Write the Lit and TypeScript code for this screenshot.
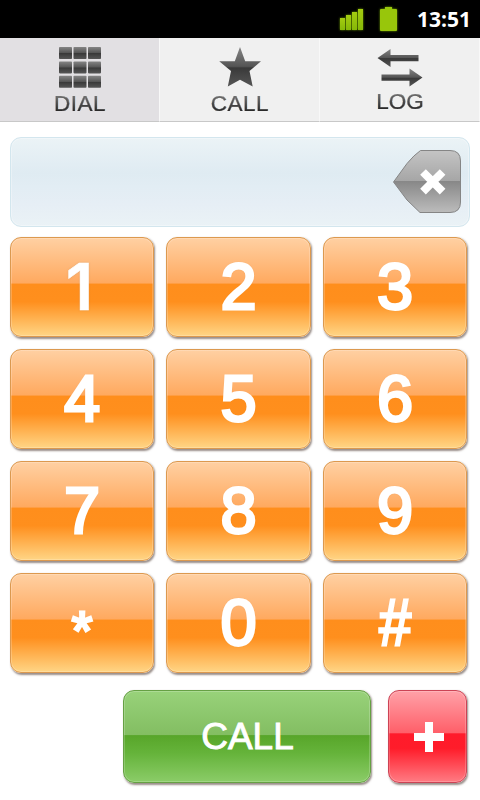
import { LitElement, html, css, svg } from "lit";
import { customElement, property, state } from "lit/decorators.js";
import { classMap } from "lit/directives/class-map.js";

const KEYS = ["1", "2", "3", "4", "5", "6", "7", "8", "9", "*", "0", "#"];

@customElement("status-bar")
export class StatusBar extends LitElement {
  @property({ type: String }) time = "";

  static styles = css`
    :host {
      display: flex;
      align-items: center;
      justify-content: flex-end;
      height: 38px;
      background: #000;
      color: #fff;
      font: bold 21px/38px "Open Sans", sans-serif;
    }

    .signal,
    .battery {
      display: block;
      filter: drop-shadow(0 0 1px #6c9a00);
    }

    .signal {
      margin-right: 15px;
    }

    .time {
      padding: 0 9px 0 19px;
    }
  `;

  render() {
    return html`
      <svg class="signal" width="26" height="26" viewBox="0 0 26 26">
        <defs>
          <linearGradient id="lime" x2="0" y2="1">
            <stop offset="0" stop-color="#a4cc10" />
            <stop offset="1" stop-color="#86b808" />
          </linearGradient>
        </defs>
        <g fill="url(#lime)">
          <rect x="2" y="12" width="5" height="12" />
          <rect x="8" y="9" width="5" height="15" />
          <rect x="14" y="6" width="5" height="18" />
          <rect x="20" y="3" width="5" height="21" />
        </g>
      </svg>
      <svg class="battery" width="19" height="26" viewBox="0 0 19 26">
        <path
          d="M2 3H6V1H13V3H17Q18 3 18 4V24Q18 25 17 25H2Q1 25 1 24V4Q1 3 2 3Z"
          fill="#98c60b"
        />
      </svg>
      <span class="time">${this.time}</span>
    `;
  }
}

@customElement("tab-item")
export class TabItem extends LitElement {
  @property({ type: String }) icon: "dial" | "star" | "log" = "dial";
  @property({ type: String }) label = "";
  @property({ type: Boolean }) active = false;

  static styles = css`
    :host {
      display: block;
    }

    .tab {
      box-sizing: border-box;
      display: flex;
      flex-direction: column;
      align-items: center;
      height: 84px;
      padding-top: 8px;
      border-bottom: 1px solid #c8c8c8;
      border-right: 1px solid #f8f8f8;
      background: #f0f0f0;
    }

    .tab.active {
      background: #e2e0e3;
    }

    .icon {
      display: block;
    }

    .label {
      margin-top: 1px;
      padding-left: 1px;
      font: 22.5px/28px "Liberation Sans", Arial, sans-serif;
      letter-spacing: 0.5px;
      color: transparent;
      background: linear-gradient(#777 5px, #222 22px);
      -webkit-background-clip: text;
      background-clip: text;
      -webkit-text-stroke: 0.2px #444;
    }

    .tab.log .label {
      margin-top: -1px;
      letter-spacing: 0;
    }
  `;

  private shape() {
    if (this.icon === "star") {
      return svg`<path fill="url(#tone)" d="M24 1L29.2 15.3H45L33.5 25L36.7 40.5L24 33.8L11.8 40.5L15 25L3.2 15.3H18.8Z" />`;
    }
    if (this.icon === "log") {
      return svg`
        <path fill="url(#tone)" d="M1.5 12L14.5 3V9H42.5V15.2H14.5V21Z" />
        <path fill="url(#tone)" d="M46.5 31.5L33.5 22.5V28.5H5.5V34.7H33.5V40.5Z" />
      `;
    }
    const cells = [0, 1, 2];
    return cells.map((row) =>
      cells.map(
        (col) =>
          svg`<rect x=${3 + col * 14.5} y=${1 + row * 14.4} width="13" height="12" rx="0.8" fill="url(#tone)" />`
      )
    );
  }

  render() {
    return html`
      <div class=${classMap({ tab: true, active: this.active, [this.icon]: true })}>
        <svg class="icon" width="48" height="43" viewBox="0 0 48 43">
          <defs>
            <linearGradient id="tone" x2="0" y2="1">
              <stop offset="0" stop-color="#858585" />
              <stop offset="0.49" stop-color="#555" />
              <stop offset="0.53" stop-color="#393939" />
              <stop offset="1" stop-color="#565656" />
            </linearGradient>
          </defs>
          ${this.shape()}
        </svg>
        <span class="label">${this.label}</span>
      </div>
    `;
  }
}

@customElement("number-field")
export class NumberField extends LitElement {
  @property({ type: String }) value = "";

  static styles = css`
    :host {
      box-sizing: border-box;
      display: flex;
      align-items: center;
      height: 90px;
      padding: 0 7px 0 14px;
      border: 1px solid #d3e6ee;
      border-radius: 11px;
      background: linear-gradient(
        #ebf3f6 0%,
        #dfebf2 40%,
        #e2edf4 55%,
        #e6eef5 75%,
        #eaf2f6 100%
      );
      box-shadow: inset 0 0 0 1px rgba(255, 255, 255, 0.3);
      font: 40px "Liberation Sans", Arial, sans-serif;
      color: #333;
    }

    .value {
      flex: 1;
    }

    .erase {
      padding: 0;
      border: 0;
      background: none;
    }

    .erase svg {
      display: block;
    }
  `;

  render() {
    return html`
      <span class="value">${this.value}</span>
      <button
        class="erase"
        @click=${() => this.dispatchEvent(new CustomEvent("erase"))}
      >
        <svg width="70" height="66" viewBox="0 0 70 66">
          <defs>
            <linearGradient id="steel" x2="0" y2="1">
              <stop offset="0" stop-color="#c4c4c4" />
              <stop offset="0.49" stop-color="#a6a6a6" />
              <stop offset="0.5" stop-color="#888" />
              <stop offset="1" stop-color="#bcbcbc" />
            </linearGradient>
          </defs>
          <path
            d="M1.5 33L15 14.5Q22 6 28.5 1.5H58Q68.5 1.5 68.5 12V53Q68.5 63.5 58 63.5H28L15 51Z"
            fill="url(#steel)"
            stroke="#858585"
          />
          <path
            d="M31 23L50.6 42.6M50.6 23L31 42.6"
            stroke="#fff"
            stroke-width="8"
          />
        </svg>
      </button>
    `;
  }
}

@customElement("gloss-button")
export class GlossButton extends LitElement {
  @property({ type: String }) tone: "orange" | "green" | "red" = "orange";

  static styles = css`
    :host {
      display: block;
    }

    .button {
      box-sizing: border-box;
      display: flex;
      align-items: center;
      justify-content: center;
      width: 100%;
      height: 100%;
      padding: 0;
      border: 1px solid;
      border-radius: 11px;
      color: #fff;
      box-shadow:
        inset 0 0 0 1px rgba(255, 255, 255, 0.2),
        1px 1.5px 2px rgba(70, 50, 40, 0.55);
    }

    .orange {
      border-color: #dc994f;
      background: linear-gradient(
        #ffd0a2 0%,
        #ffa95f 46%,
        #ff8e1c 47%,
        #ff8f1d 65%,
        #ffd585 100%
      );
    }

    .green {
      border-color: #66a044;
      background: linear-gradient(
        #98d27a 0%,
        #83be62 48%,
        #58a62a 49%,
        #65b33a 68%,
        #8bcc68 100%
      );
    }

    .red {
      border-color: #cc4355;
      background: linear-gradient(
        #ffa1a8 0%,
        #ff5f69 46%,
        #ff1b2b 47%,
        #ff1c2a 63%,
        #ff7b83 100%
      );
    }
  `;

  render() {
    return html`
      <button class="button ${this.tone}"><slot></slot></button>
    `;
  }
}

@customElement("app-root")
export class AppRoot extends LitElement {
  @state() private number = "";

  static styles = css`
    :host {
      display: block;
      height: 800px;
      overflow: hidden;
      background: #fff;
    }

    .tabs {
      display: grid;
      grid-template-columns: repeat(3, 1fr);
    }

    .field {
      margin: 15px 10px 10px;
    }

    .keys {
      display: grid;
      grid-template-columns: 144px 145px 144px;
      grid-auto-rows: 100px;
      gap: 12px;
      margin-left: 10px;
    }

    .digit {
      font: 65px/98px "Liberation Sans", Arial, sans-serif;
      -webkit-text-stroke: 2.8px #fff;
      text-shadow: 0 0 2px rgba(160, 130, 100, 0.5);
    }

    .digit.one {
      padding-right: 5px;
      font-family: Inter, sans-serif;
      font-weight: 600;
      -webkit-text-stroke-width: 0.5px;
    }

    .digit.star {
      padding-top: 15px;
      font-size: 53px;
      line-height: 70px;
    }

    .digit.hash {
      transform: scaleX(0.88);
    }

    .actions {
      display: grid;
      grid-template-columns: 248px 79px;
      grid-auto-rows: 93px;
      gap: 17px;
      margin: 17px 0 0 123px;
    }

    .call {
      padding-left: 1px;
      font: 37px/91px "Liberation Sans", Arial, sans-serif;
      -webkit-text-stroke: 0.9px #fff;
    }

    .plus {
      display: block;
      margin-left: 2px;
    }
  `;

  render() {
    return html`
      <status-bar time="13:51"></status-bar>
      <div class="tabs">
        <tab-item icon="dial" label="DIAL" active></tab-item>
        <tab-item icon="star" label="CALL"></tab-item>
        <tab-item icon="log" label="LOG"></tab-item>
      </div>
      <number-field
        class="field"
        .value=${this.number}
        @erase=${() => (this.number = this.number.slice(0, -1))}
      ></number-field>
      <div class="keys">
        ${KEYS.map(
          (key) => html`
            <gloss-button @click=${() => (this.number += key)}>
              <span
                class=${classMap({
                  digit: true,
                  one: key === "1",
                  star: key === "*",
                  hash: key === "#",
                })}
                >${key}</span
              >
            </gloss-button>
          `
        )}
      </div>
      <div class="actions">
        <gloss-button tone="green"><span class="call">CALL</span></gloss-button>
        <gloss-button tone="red">
          <svg class="plus" width="30" height="30" viewBox="0 0 30 30">
            <path d="M11 0H19V11H30V19H19V30H11V19H0V11H11Z" fill="#fff" />
          </svg>
        </gloss-button>
      </div>
    `;
  }
}

declare global {
  interface HTMLElementTagNameMap {
    "status-bar": StatusBar;
    "tab-item": TabItem;
    "number-field": NumberField;
    "gloss-button": GlossButton;
    "app-root": AppRoot;
  }
}
